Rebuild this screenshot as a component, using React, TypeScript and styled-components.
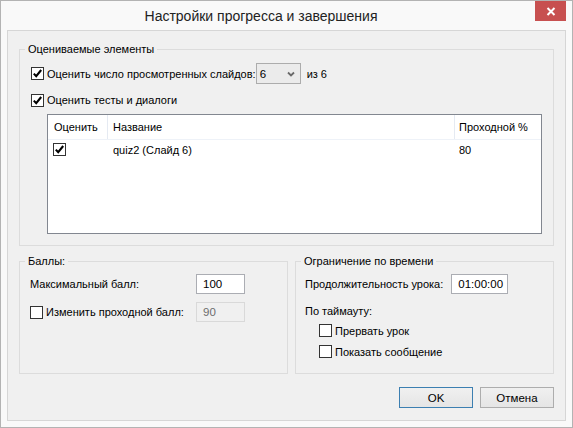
import React from "react";
import styled, { createGlobalStyle } from "styled-components";

const Global = createGlobalStyle`
  html, body { margin: 0; padding: 0; background: #ffffff; }
  body { font-family: "Liberation Sans", Arial, sans-serif; font-size: 11px; color: #000; }
  * { box-sizing: border-box; }
`;

const Window = styled.div`
  width: 573px;
  height: 428px;
  border: 1px solid #b3b3b3;
  background: #f9f9f9;
  display: flex;
  flex-direction: column;
`;

const TitleBar = styled.div`
  height: 29px;
  display: flex;
  align-items: flex-start;
  flex-shrink: 0;
`;

const Title = styled.div`
  flex: 1;
  text-align: center;
  font-size: 14px;
  line-height: 31px;
  color: #222;
  padding-right: 14px;
`;

const CloseButton = styled.div`
  width: 31px;
  height: 20px;
  background: #c75050;
  margin-right: 6px;
  display: flex;
  align-items: center;
  justify-content: center;
`;

const Panel = styled.div`
  flex: 1;
  margin: 0 6px 6px 6px;
  border: 1px solid #d6d6d6;
  background: #f0f0f0;
  padding: 11px 11px 12px 11px;
  display: flex;
  flex-direction: column;
`;

const Group = styled.fieldset<{ $h: number; $w?: number }>`
  margin: 0;
  padding: 0;
  border: 1px solid #dcdcdc;
  height: ${(p) => p.$h}px;
  min-width: 0;
  flex: ${(p) => (p.$w ? `0 0 ${p.$w}px` : "1")};
`;

const Legend = styled.legend`
  margin-left: 5px;
  padding: 0 3px;
  line-height: 15px;
  font-size: 11px;
  color: #000;
`;

const GroupBody = styled.div<{ $pt: number; $pl: number }>`
  padding: ${(p) => p.$pt}px 0 0 ${(p) => p.$pl}px;
  display: flex;
  flex-direction: column;
`;

const Row = styled.div<{ $h: number; $mt?: number; $ml?: number }>`
  display: flex;
  align-items: center;
  height: ${(p) => p.$h}px;
  margin-top: ${(p) => p.$mt ?? 0}px;
  margin-left: ${(p) => p.$ml ?? 0}px;
`;

const Label = styled.span<{ $w?: number }>`
  white-space: nowrap;
  font-size: 11px;
  ${(p) => (p.$w ? `width: ${p.$w}px;` : "")}
`;

const BoxWrap = styled.span`
  width: 13px;
  height: 13px;
  border: 1px solid #333;
  background: #fff;
  display: inline-flex;
  align-items: center;
  justify-content: center;
  flex-shrink: 0;
  margin-right: 3px;
`;

const Check = ({ checked }: { checked?: boolean }) => (
  <BoxWrap>
    {checked && (
      <svg width="11" height="11" viewBox="0 0 11 11">
        <polyline points="1.8,5.6 4.2,8.2 9.2,2" fill="none" stroke="#000" strokeWidth="2.1" />
      </svg>
    )}
  </BoxWrap>
);

const Select = styled.div`
  width: 45px;
  height: 21px;
  border: 1px solid #acacac;
  background: #ebebeb;
  display: flex;
  align-items: center;
  justify-content: space-between;
  padding: 0 5px 0 3px;
  margin-left: 0;
  font-size: 11.5px;
`;

const Suffix = styled.span`
  margin-left: 6px;
  font-size: 11px;
`;

const ListBox = styled.div`
  margin: 6px 11px 0 27px;
  height: 120px;
  border: 1px solid #828790;
  background: #fff;
  font-size: 11px;
`;

const ListRow = styled.div<{ $h: number; $header?: boolean }>`
  display: grid;
  grid-template-columns: 59px 347px 1fr;
  height: ${(p) => p.$h}px;
  align-items: stretch;
  ${(p) => (p.$header ? "border-bottom: 1px solid #eef2f8;" : "")}
`;

const Cell = styled.div<{ $sep?: boolean; $pl: number }>`
  display: flex;
  align-items: center;
  padding-left: ${(p) => p.$pl}px;
  white-space: nowrap;
  ${(p) => (p.$sep ? "border-left: 1px solid #e5eaf2;" : "")}
`;

const BottomRow = styled.div`
  display: flex;
  gap: 7px;
  margin-top: 8px;
`;

const Input = styled.div<{ $w: number; $disabled?: boolean; $ml?: number }>`
  width: ${(p) => p.$w}px;
  height: 20px;
  border: 1px solid ${(p) => (p.$disabled ? "#d9d9d9" : "#abadb3")};
  background: ${(p) => (p.$disabled ? "#f0f0f0" : "#fff")};
  color: ${(p) => (p.$disabled ? "#6d6d6d" : "#000")};
  display: flex;
  align-items: center;
  padding-left: 6px;
  margin-left: ${(p) => p.$ml ?? 0}px;
  flex-shrink: 0;
  font-size: 11.5px;
`;

const Buttons = styled.div`
  display: flex;
  justify-content: flex-end;
  gap: 7px;
  margin-top: 13px;
`;

const Button = styled.div<{ $default?: boolean }>`
  width: 74px;
  height: 21px;
  border: 1px solid ${(p) => (p.$default ? "#3c7fb1" : "#adadad")};
  background: linear-gradient(#f0f0f0, #e5e5e5);
  display: flex;
  align-items: center;
  justify-content: center;
  color: #000;
  font-size: 11.5px;
`;

export default function App() {
  return (
    <>
      <Global />
      <Window>
        <TitleBar>
          <Title>Настройки прогресса и завершения</Title>
          <CloseButton>
            <svg width="10" height="9" viewBox="0 0 10 9">
              <path d="M1.5 1 L8.5 8 M8.5 1 L1.5 8" stroke="#fff" strokeWidth="2" />
            </svg>
          </CloseButton>
        </TitleBar>
        <Panel>
          <Group $h={204}>
            <Legend>Оцениваемые элементы</Legend>
            <GroupBody $pt={6} $pl={11}>
              <Row $h={21}>
                <Check checked />
                <Label>Оценить число просмотренных слайдов:</Label>
                <Select>
                  <span>6</span>
                  <svg width="8" height="6" viewBox="0 0 8 6">
                    <polyline points="1,1.5 4,4.5 7,1.5" fill="none" stroke="#6a6a6a" strokeWidth="1.8" />
                  </svg>
                </Select>
                <Suffix>из 6</Suffix>
              </Row>
              <Row $h={16} $mt={8}>
                <Check checked />
                <Label>Оценить тесты и диалоги</Label>
              </Row>
            </GroupBody>
            <ListBox>
              <ListRow $h={25} $header>
                <Cell $pl={6}>Оценить</Cell>
                <Cell $sep $pl={5}>Название</Cell>
                <Cell $sep $pl={4}>Проходной %</Cell>
              </ListRow>
              <ListRow $h={19}>
                <Cell $pl={5}>
                  <Check checked />
                </Cell>
                <Cell $pl={6}>quiz2 (Слайд 6)</Cell>
                <Cell $pl={5}>80</Cell>
              </ListRow>
            </ListBox>
          </Group>
          <BottomRow>
            <Group $h={120} $w={269}>
              <Legend>Баллы:</Legend>
              <GroupBody $pt={5} $pl={10}>
                <Row $h={20}>
                  <Label $w={166}>Максимальный балл:</Label>
                  <Input $w={49}>100</Input>
                </Row>
                <Row $h={20} $mt={8}>
                  <Check />
                  <Label $w={150}>Изменить проходной балл:</Label>
                  <Input $w={49} $disabled>90</Input>
                </Row>
              </GroupBody>
            </Group>
            <Group $h={120}>
              <Legend>Ограничение по времени</Legend>
              <GroupBody $pt={5} $pl={9}>
                <Row $h={20}>
                  <Label>Продолжительность урока:</Label>
                  <Input $w={57} $ml={8}>01:00:00</Input>
                </Row>
                <Row $h={16} $mt={9}>
                  <Label>По таймауту:</Label>
                </Row>
                <Row $h={15} $mt={4} $ml={14}>
                  <Check />
                  <Label>Прервать урок</Label>
                </Row>
                <Row $h={15} $mt={6} $ml={14}>
                  <Check />
                  <Label>Показать сообщение</Label>
                </Row>
              </GroupBody>
            </Group>
          </BottomRow>
          <Buttons>
            <Button $default>OK</Button>
            <Button>Отмена</Button>
          </Buttons>
        </Panel>
      </Window>
    </>
  );
}
